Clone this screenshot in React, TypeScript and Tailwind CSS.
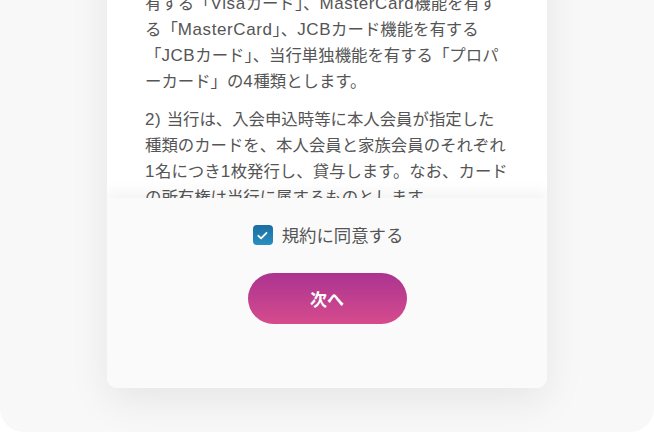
import React from 'react';

const para1 = [
  '1) 当行が発行するカードの種類は、Visa機能を',
  '有する「Visaカード」、MasterCard機能を有す',
  'る「MasterCard」、JCBカード機能を有する',
  '「JCBカード」、当行単独機能を有する「プロパ',
  'ーカード」の4種類とします。',
];

const para2 = [
  '2) 当行は、入会申込時等に本人会員が指定した',
  '種類のカードを、本人会員と家族会員のそれぞれ',
  '1名につき1枚発行し、貸与します。なお、カード',
  'の所有権は当行に属するものとします。',
];

// latin runs get a wider face, like the original's system font
const Mixed: React.FC<{ text: string }> = ({ text }) => (
  <>
    {text.split(/([A-Za-z0-9() ]+)/).map((part, i) =>
      /^[A-Za-z0-9() ]+$/.test(part) ? (
        <span key={i} className="text-[17px] leading-none tracking-[0.6px]" style={{ fontFamily: '"Liberation Sans", sans-serif' }}>
          {part}
        </span>
      ) : (
        <React.Fragment key={i}>{part}</React.Fragment>
      )
    )}
  </>
);

const App: React.FC = () => {
  return (
    <div className="w-[654px] h-[432px] bg-white" style={{ fontFamily: '"Noto Sans CJK JP", "Noto Sans", sans-serif' }}>
      <div className="h-full rounded-b-[24px] bg-[#f8f8f8] overflow-hidden flex flex-col items-center justify-end pb-[44px]">
        <div className="w-[440px] shrink-0 rounded-[10px] bg-white overflow-hidden shadow-[0_12px_40px_rgba(0,0,0,0.08)]">
          {/* terms text */}
          <div className="h-[255px] overflow-hidden px-[38px] pt-[20px] text-[16.4px] leading-[26px] text-[#555]">
            <p className="mb-[12px]">
              {para1.map((l) => (
                <span key={l} className="block h-[26px] whitespace-nowrap"><Mixed text={l} /></span>
              ))}
            </p>
            <p>
              {para2.map((l) => (
                <span key={l} className="block h-[26px] whitespace-nowrap"><Mixed text={l} /></span>
              ))}
            </p>
          </div>

          {/* footer */}
          <div className="relative z-10 h-[190px] bg-[#fafafa] shadow-[0_-6px_14px_rgba(0,0,0,0.05)] flex flex-col items-center pt-[27px]">
            <label className="flex items-center gap-[9px] pl-[2px]">
              <span className="w-[20px] h-[20px] rounded-[4px] bg-gradient-to-b from-[#1a6da3] to-[#2a8fc0] flex items-center justify-center">
                <svg width="13" height="13" viewBox="0 0 12 12" fill="none">
                  <path d="M2.2 6.3l2.5 2.4 5-5.2" stroke="white" strokeWidth="1.7" strokeLinecap="round" strokeLinejoin="round" />
                </svg>
              </span>
              <span className="text-[17.4px] leading-[20px] text-[#555]">規約に同意する</span>
            </label>
            <button className="mt-[28px] w-[159px] h-[51px] rounded-full bg-gradient-to-b from-[#ab3390] to-[#d64b8c] text-white text-[17px] font-semibold">
              次へ
            </button>
          </div>
        </div>
      </div>
    </div>
  );
};

export default App;
